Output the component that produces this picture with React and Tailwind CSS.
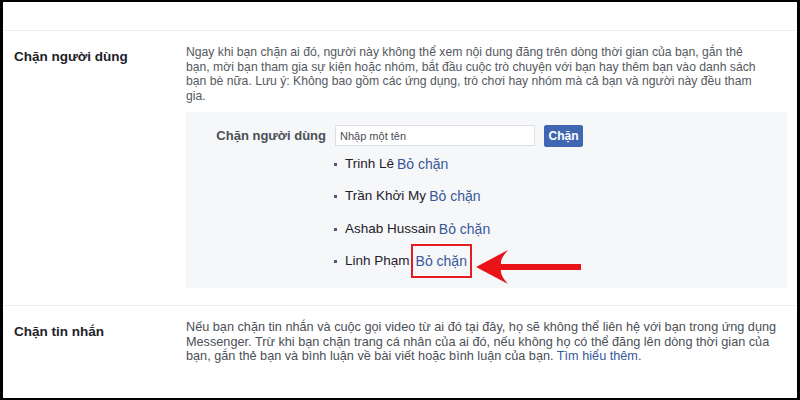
const blocked = ["Trinh Lê", "Trần Khởi My", "Ashab Hussain", "Linh Phạm"];

const Arrow = () => (
  <svg
    className="absolute left-[59px] top-[-1px]"
    width="110"
    height="34"
    viewBox="0 0 110 34"
  >
    <path
      d="M1 17 L33 0 Q25 9 26 14 L106 14 L106 20 L26 20 Q25 25 33 34 Z"
      fill="#e8141a"
    />
  </svg>
);

export default function App() {
  return (
    <div className="w-[800px] h-[400px] overflow-hidden bg-white border-x-[3px] border-y-2 border-black font-['Liberation_Sans',Arial,sans-serif]">
      <div className="h-[28px]" />

      {/* Chặn người dùng */}
      <div className="mx-[2px] border-t border-[#e9ebee] pt-[14px] pb-[17px] flex">
        <div className="w-[181px] pl-[9px] pt-[2px] text-[13.5px] font-bold text-[#1d2129]">
          Chặn người dùng
        </div>
        <div className="w-[601px]">
          <p className="text-[12.2px] leading-[14.7px] text-[#555960] whitespace-nowrap">
            Ngay khi bạn chặn ai đó, người này không thể xem nội dung đăng trên dòng thời gian của bạn, gắn thẻ
            <br />
            bạn, mời bạn tham gia sự kiện hoặc nhóm, bắt đầu cuộc trò chuyện với bạn hay thêm bạn vào danh sách
            <br />
            bạn bè nữa. Lưu ý: Không bao gồm các ứng dụng, trò chơi hay nhóm mà cả bạn và người này đều tham
            <br />
            gia.
          </p>

          <div className="mt-[8px] h-[176px] bg-[#f6f7f9] pt-[13px]">
            <div className="flex items-center">
              <div className="w-[140px] text-right text-[13px] font-bold text-[#4b4f56]">
                Chặn người dùng
              </div>
              <input
                className="ml-[9px] w-[200px] h-[21px] bg-white border border-[#dddfe2] px-[4px] text-[11px] text-[#1d2129] placeholder:text-[#4b4f56] outline-none"
                placeholder="Nhập một tên"
              />
              <button className="ml-[9px] w-[39px] h-[22px] rounded-[2px] bg-[#4267b2] border border-[#4267b2] text-white text-[12px] font-bold">
                Chặn
              </button>
            </div>

            <ul className="ml-[148px] mt-[1px]">
              {blocked.map((name, i) => (
                <li key={name} className="h-[32.5px] flex items-center text-[13.5px] text-[#1d2129]">
                  <span className="w-[3px] h-[3px] bg-[#4b5b7a] mr-[8px]" />
                  <span>{name}</span>
                  {i === blocked.length - 1 ? (
                    <span className="relative ml-[6px] text-[14px] bg-[#f6f7f9]">
                      <span className="absolute -left-[5px] -right-[5px] -top-[7px] -bottom-[6px] border-2 border-[#e11d23] bg-[#f6f7f9]" />
                      <a href="#" className="relative text-[#385898]">
                        Bỏ chặn
                      </a>
                      <Arrow />
                    </span>
                  ) : (
                    <a href="#" className="ml-[3px] text-[14px] text-[#385898]">
                      Bỏ chặn
                    </a>
                  )}
                </li>
              ))}
            </ul>
          </div>
        </div>
      </div>

      {/* Chặn tin nhắn */}
      <div className="mx-[2px] border-t border-[#e9ebee] pt-[14px] flex">
        <div className="w-[181px] pl-[9px] pt-[2px] text-[13.5px] font-bold text-[#1d2129]">
          Chặn tin nhắn
        </div>
        <p className="w-[601px] text-[12.7px] leading-[14.7px] text-[#4b4f56] whitespace-nowrap">
          Nếu bạn chặn tin nhắn và cuộc gọi video từ ai đó tại đây, họ sẽ không thể liên hệ với bạn trong ứng dụng
          <br />
          Messenger. Trừ khi bạn chặn trang cá nhân của ai đó, nếu không họ có thể đăng lên dòng thời gian của
          <br />
          bạn, gắn thẻ bạn và bình luận về bài viết hoặc bình luận của bạn.{" "}
          <a href="#" className="text-[#365899]">
            Tìm hiểu thêm.
          </a>
        </p>
      </div>
    </div>
  );
}
